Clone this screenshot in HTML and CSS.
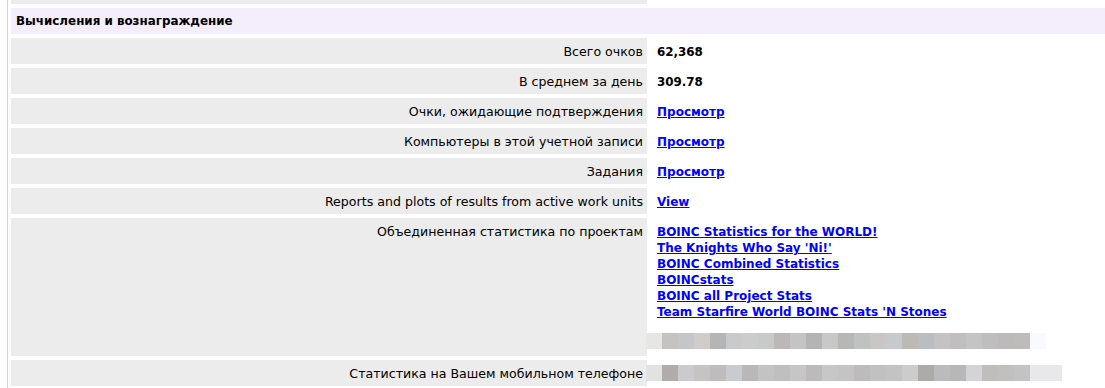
FILE: index.html
```html
<!DOCTYPE html>
<html>
<head>
    <link rel="stylesheet" href="styles.css">
</head>
<body>
    <div class="page">
        <table class="info">
            <tr class="prev-row">
                <td class="fieldname"></td>
                <td class="fieldvalue"></td>
            </tr>
            <tr>
                <th class="heading" colspan="2">Вычисления и вознаграждение</th>
            </tr>
            <tr>
                <td class="fieldname">Всего очков</td>
                <td class="fieldvalue"><b>62,368</b></td>
            </tr>
            <tr>
                <td class="fieldname">В среднем за день</td>
                <td class="fieldvalue"><b>309.78</b></td>
            </tr>
            <tr>
                <td class="fieldname">Очки, ожидающие подтверждения</td>
                <td class="fieldvalue"><a href="#">Просмотр</a></td>
            </tr>
            <tr>
                <td class="fieldname">Компьютеры в этой учетной записи</td>
                <td class="fieldvalue"><a href="#">Просмотр</a></td>
            </tr>
            <tr>
                <td class="fieldname">Задания</td>
                <td class="fieldvalue"><a href="#">Просмотр</a></td>
            </tr>
            <tr>
                <td class="fieldname">Reports and plots of results from active work units</td>
                <td class="fieldvalue"><a href="#">View</a></td>
            </tr>
            <tr>
                <td class="fieldname top">Объединенная статистика по проектам</td>
                <td class="fieldvalue top">
                    <a href="#">BOINC Statistics for the WORLD!</a><br>
                    <a href="#">The Knights Who Say 'Ni!'</a><br>
                    <a href="#">BOINC Combined Statistics</a><br>
                    <a href="#">BOINCstats</a><br>
                    <a href="#">BOINC all Project Stats</a><br>
                    <a href="#">Team Starfire World BOINC Stats 'N Stones</a>
                    <div class="blur blur-a"></div>
                </td>
            </tr>
            <tr>
                <td class="fieldname">Статистика на Вашем мобильном телефоне</td>
                <td class="fieldvalue"><div class="blur blur-b"></div></td>
            </tr>
        </table>
    </div>
</body>
</html>
```

FILE: styles.css
```css
body {
    margin: 0;
    font-family: "DejaVu Sans", Verdana, sans-serif;
    font-size: 12.6px;
    background: white;
    overflow: hidden;
}

.page {
    margin-left: 7px;
    border-left: 1px solid #d4d4d4;
    min-height: 388px;
}

.info {
    border-collapse: separate;
    border-spacing: 3px 4px;
    margin-top: -4px;
    width: 1100px;
}

.info td,
.info th {
    height: 26px;
    padding: 0 4px;
    box-sizing: border-box;
}

.prev-row td {
    height: 4px;
}

.heading {
    background-color: #f3edfc;
    text-align: left;
    font-weight: bold;
    font-size: 11.9px;
    padding-left: 5px !important;
}

.fieldname {
    width: 636px;
    background-color: #ececec;
    text-align: right;
}

.fieldvalue {
    padding-left: 7px !important;
}

.fieldvalue b {
    font-size: 11.9px;
}

.top {
    vertical-align: top;
    padding-top: 6px !important;
    padding-bottom: 7px !important;
    line-height: 16px;
}

a {
    color: #0000ff;
    font-weight: bold;
    font-size: 12px;
}

.blur {
    height: 16px;
    margin-left: -11px;
}

.blur-a {
    margin-top: 13px;
    width: 400px;
    background: linear-gradient(to right,
        #e6e6e4 0 16px, #c4c3c1 16px 32px, #c4c6c8 32px 48px, #cfccca 48px 64px,
        #b5b5b5 64px 80px, #c9cacb 80px 96px, #cccccc 96px 112px, #c8c9c9 112px 128px,
        #bcb8b8 128px 144px, #c4c4c4 144px 160px, #b4b4b4 160px 176px, #c8c8c8 176px 192px,
        #b7b7b5 192px 208px, #c0c1c1 208px 224px, #c9c7c5 224px 240px, #c7cacc 240px 256px,
        #bdbab6 256px 272px, #b9bec1 272px 288px, #c4c2c2 288px 304px, #c0bebe 304px 320px,
        #c4c4c4 320px 336px, #bebebe 336px 352px, #bcbaba 352px 368px, #bebcbb 368px 384px,
        #f8fafd 384px 400px);
}

.blur-b {
    width: 416px;
    background: linear-gradient(to right,
        #e2e2e2 0 16px, #b0acac 16px 32px, #cbcbcd 32px 48px, #c6c4c3 48px 64px,
        #bebcbd 64px 80px, #cacbce 80px 96px, #b9b7b7 96px 112px, #c3c3c3 112px 128px,
        #c0bfbf 128px 144px, #c6c6c6 144px 160px, #bcbaba 160px 176px, #c7c7c7 176px 192px,
        #c4c4c4 192px 208px, #bdbbbb 208px 224px, #c1c1c1 224px 240px, #c3c3c3 240px 256px,
        #cccccc 256px 272px, #adaaaa 272px 288px, #bbbbbd 288px 304px, #b7b7b7 304px 320px,
        #d4d4d6 320px 336px, #c0bebd 336px 352px, #c2c0bf 352px 368px, #c3c3c3 368px 384px,
        #e8e8ea 384px 400px);
}
```
